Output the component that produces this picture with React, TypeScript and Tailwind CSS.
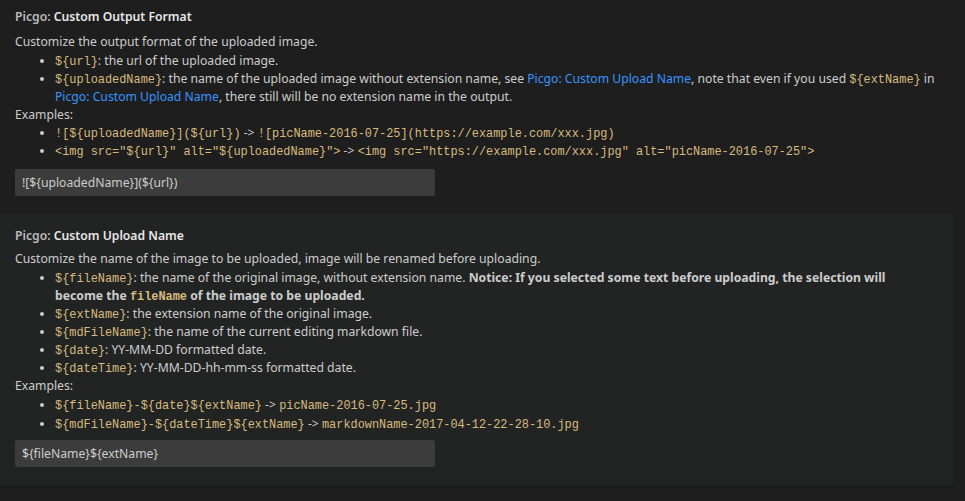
import React from "react";

const C = ({ children }: { children: React.ReactNode }) => (
  <code className="font-['Liberation_Mono','DejaVu_Sans_Mono',monospace] text-[11.9px] leading-none text-[#d7ba7d]">{children}</code>
);

const A = ({ children }: { children: React.ReactNode }) => (
  <span className="text-[#3794ff]">{children}</span>
);

export default function App() {
  return (
    <div className="w-[965px] h-[501px] overflow-hidden bg-[#1e1e1e] font-['Noto_Sans',sans-serif] text-[12.2px] leading-[18px] text-[#cccccc]">
      <div className="w-[953px] pl-[15px] pr-[4px] pt-[8px] pb-[18px]">
        <div className="font-semibold">
          <span className="text-[#bbbbbb]">Picgo: </span>
          <span className="text-[#e7e7e7]">Custom Output Format</span>
        </div>
        <div className="mt-[7px]">
          <div>Customize the output format of the uploaded image.</div>
          <ul className="list-disc pl-10 mt-[1px]">
            <li>
              <C>{"${url}"}</C>: the url of the uploaded image.
            </li>
            <li>
              <C>{"${uploadedName}"}</C>: the name of the uploaded image without extension name, see{" "}
              <A>Picgo: Custom Upload Name</A>, note that even if you used <C>{"${extName}"}</C> in
              <br />
              <A>Picgo: Custom Upload Name</A>, there still will be no extension name in the output.
            </li>
          </ul>
          <div>Examples:</div>
          <ul className="list-disc pl-10">
            <li>
              <C>{"![${uploadedName}](${url})"}</C> -&gt; <C>{"![picName-2016-07-25](https://example.com/xxx.jpg)"}</C>
            </li>
            <li>
              <C>{'<img src="${url}" alt="${uploadedName}">'}</C> -&gt;{" "}
              <C>{'<img src="https://example.com/xxx.jpg" alt="picName-2016-07-25">'}</C>
            </li>
          </ul>
        </div>
        <div className="mt-[9px] w-[420px] h-[27px] bg-[#3c3c3c] rounded-[2px] px-[7px] flex items-center text-[#cccccc]">
          {"![${uploadedName}](${url})"}
        </div>
      </div>

      <div className="w-[953px] bg-[#222424] pl-[15px] pr-[4px] pt-[13px] pb-[18px]">
        <div className="font-semibold">
          <span className="text-[#bbbbbb]">Picgo: </span>
          <span className="text-[#e7e7e7]">Custom Upload Name</span>
        </div>
        <div className="mt-[5px]">
          <div>Customize the name of the image to be uploaded, image will be renamed before uploading.</div>
          <ul className="list-disc pl-10 mt-[1px]">
            <li>
              <C>{"${fileName}"}</C>: the name of the original image, without extension name.{" "}
              <strong className="font-bold">
                Notice: If you selected some text before uploading, the selection will
                <br />
                become the <C>fileName</C> of the image to be uploaded.
              </strong>
            </li>
            <li>
              <C>{"${extName}"}</C>: the extension name of the original image.
            </li>
            <li>
              <C>{"${mdFileName}"}</C>: the name of the current editing markdown file.
            </li>
            <li>
              <C>{"${date}"}</C>: YY-MM-DD formatted date.
            </li>
            <li>
              <C>{"${dateTime}"}</C>: YY-MM-DD-hh-mm-ss formatted date.
            </li>
          </ul>
          <div>Examples:</div>
          <ul className="list-disc pl-10">
            <li className="leading-[19px]">
              <C>{"${fileName}-${date}${extName}"}</C> -&gt; <C>picName-2016-07-25.jpg</C>
            </li>
            <li className="leading-[19px]">
              <C>{"${mdFileName}-${dateTime}${extName}"}</C> -&gt; <C>markdownName-2017-04-12-22-28-10.jpg</C>
            </li>
          </ul>
        </div>
        <div className="mt-[7px] w-[420px] h-[27px] bg-[#3c3c3c] rounded-[2px] px-[7px] flex items-center text-[#cccccc]">
          {"${fileName}${extName}"}
        </div>
      </div>

      <div className="w-[953px] pl-[15px] pt-[14px]">
        <div className="font-semibold">
          <span className="text-[#bbbbbb]">Picgo: </span>
          <span className="text-[#e7e7e7]">Data Path</span>
        </div>
      </div>
    </div>
  );
}
